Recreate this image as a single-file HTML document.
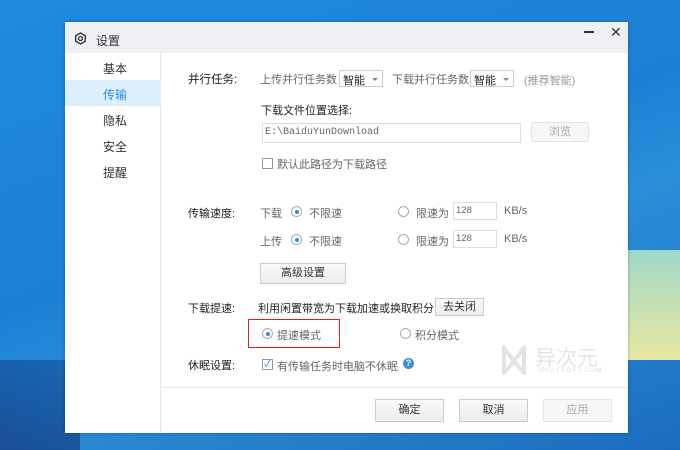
<!DOCTYPE html>
<html><head><meta charset="utf-8"><style>
*{margin:0;padding:0;box-sizing:border-box}
body{width:680px;height:450px;overflow:hidden;position:relative;font-family:"Liberation Sans","Noto Sans CJK SC",sans-serif;font-size:11px;color:#333;
background:linear-gradient(160deg,#1f8ae0 0%,#1c7fd6 45%,#2a8fd8 60%,#1b6cc0 100%)}
.a{position:absolute;white-space:nowrap}
#bg1{position:absolute;right:0;top:250px;width:60px;height:110px;background:linear-gradient(180deg,#9fd8c8,#e8e8a0);}
#bg2{position:absolute;left:0;top:360px;width:80px;height:90px;background:linear-gradient(200deg,#1866b5,#1a4f95)}
#win{position:absolute;left:65px;top:22px;width:563px;height:411px;background:#fff;box-shadow:0 0 3px rgba(0,0,0,.3)}
#tb{position:absolute;left:0;top:0;width:563px;height:31px;background:#eef0f3}
#side{position:absolute;left:0;top:31px;width:96px;height:380px;border-right:1px solid #e6e6e6}
.sel{position:absolute;left:0;top:27px;width:96px;height:26px;background:#dcefff}
.dd{position:absolute;height:17px;border:1px solid #ccc;background:#fff;font-size:11px;padding:1px 3px;color:#222}
.dd:after{content:"";position:absolute;right:4px;top:7px;border:3px solid transparent;border-top:3px solid #888}
.btn{position:absolute;border:1px solid #ccc;background:linear-gradient(#fafafa,#ececec);text-align:center;font-size:11px;color:#333}
.rad{position:absolute;width:11px;height:11px;border:1px solid #aaa;border-radius:50%;background:#fff}
.rad.on:after{content:"";position:absolute;left:2.5px;top:2.5px;width:4px;height:4px;border-radius:50%;background:#2a8ee8}
.inp{position:absolute;border:1px solid #ddd;background:#fff;font-size:10px;color:#666;padding:3px 2px}
.gray{color:#666}
</style></head><body>
<div id="bg1"></div><div id="bg2"></div>
<div id="win">
 <div id="tb">
  <svg class="a" style="left:9px;top:10px" width="13" height="13" viewBox="0 0 13 13"><path d="M6.5 1 L11.3 3.75 L11.3 9.25 L6.5 12 L1.7 9.25 L1.7 3.75Z" fill="none" stroke="#333" stroke-width="1.4"/><circle cx="6.5" cy="6.5" r="2" fill="none" stroke="#333" stroke-width="1.3"/></svg>
  <div class="a" style="left:31px;top:10px;font-size:12px;color:#333">设置</div>
  <div class="a" style="left:519px;top:9px;width:10px;height:1.5px;background:#333"></div>
  <div class="a" style="left:545px;top:2px;font-size:14px;color:#333">✕</div>
 </div>
 <div id="side">
  <div class="sel"></div>
  <div class="a" style="left:38px;top:7px;font-size:12px">基本</div>
  <div class="a" style="left:38px;top:33px;font-size:12px;color:#2a8ee8">传输</div>
  <div class="a" style="left:38px;top:59px;font-size:12px">隐私</div>
  <div class="a" style="left:38px;top:85px;font-size:12px">安全</div>
  <div class="a" style="left:38px;top:111px;font-size:12px">提醒</div>
 </div>
 <div class="a" style="left:123px;top:49px;font-size:11.5px;color:#222">并行任务:</div>
 <div class="a gray" style="left:195px;top:49px">上传并行任务数</div>
 <div class="dd" style="left:274px;top:48px;width:44px">智能</div>
 <div class="a gray" style="left:327px;top:49px">下载并行任务数</div>
 <div class="dd" style="left:405px;top:48px;width:44px">智能</div>
 <div class="a" style="left:459px;top:50px;color:#999">(推荐智能)</div>
 <div class="a" style="left:196px;top:80px;color:#222">下载文件位置选择:</div>
 <div class="inp" style="left:197px;top:101px;width:259px;height:20px;font-family:'Liberation Mono',monospace">E:\BaiduYunDownload</div>
 <div class="btn" style="left:466px;top:100px;width:58px;height:20px;line-height:18px;color:#aaa;background:#f7f7f7;border-color:#e3e3e3">浏览</div>
 <div class="a" style="left:197px;top:136px;width:11px;height:11px;border:1px solid #999;background:#fff"></div>
 <div class="a gray" style="left:212px;top:134px">默认此路径为下载路径</div>
 <div class="a" style="left:123px;top:183px;color:#222">传输速度:</div>
 <div class="a gray" style="left:195px;top:183px">下载</div>
 <div class="rad on" style="left:226px;top:184px"></div>
 <div class="a gray" style="left:244px;top:183px">不限速</div>
 <div class="rad" style="left:333px;top:184px"></div>
 <div class="a gray" style="left:351px;top:183px">限速为</div>
 <div class="inp" style="left:388px;top:180px;width:44px;height:18px;font-size:9.5px;padding:2px">128</div>
 <div class="a gray" style="left:439px;top:183px">KB/s</div>
 <div class="a gray" style="left:195px;top:211px">上传</div>
 <div class="rad on" style="left:226px;top:212px"></div>
 <div class="a gray" style="left:244px;top:211px">不限速</div>
 <div class="rad" style="left:333px;top:212px"></div>
 <div class="a gray" style="left:351px;top:211px">限速为</div>
 <div class="inp" style="left:388px;top:208px;width:44px;height:18px;font-size:9.5px;padding:2px">128</div>
 <div class="a gray" style="left:439px;top:211px">KB/s</div>
 <div class="btn" style="left:195px;top:241px;width:86px;height:21px;line-height:19px">高级设置</div>
 <div class="a" style="left:123px;top:278px;color:#222">下载提速:</div>
 <div class="a" style="left:193px;top:278px;color:#222">利用闲置带宽为下载加速或换取积分</div>
 <div class="btn" style="left:370px;top:276px;width:49px;height:18px;line-height:16px">去关闭</div>
 <div class="a" style="left:183px;top:297px;width:92px;height:29px;border:1.5px solid #e02020"></div>
 <div class="rad on" style="left:197px;top:306px"></div>
 <div class="a gray" style="left:212px;top:305px">提速模式</div>
 <div class="rad" style="left:335px;top:306px"></div>
 <div class="a gray" style="left:350px;top:305px">积分模式</div>
 <div class="a" style="left:123px;top:335px;color:#222">休眠设置:</div>
 <div class="a" style="left:197px;top:337px;width:11px;height:11px;border:1px solid #999;background:#fff;font-size:10px;line-height:9px;color:#2a8ee8;text-align:center">✓</div>
 <div class="a gray" style="left:212px;top:336px">有传输任务时电脑不休眠</div>
 <div class="a" style="left:338px;top:336px;width:11px;height:11px;border-radius:50%;background:#3b8fe0;color:#fff;font-size:9px;line-height:11px;text-align:center;font-weight:bold">?</div>
 <svg class="a" style="left:436px;top:323px" width="26" height="30" viewBox="0 0 26 30"><path d="M3 28 V3 L13 16 L23 3 V28 L13 16Z" fill="none" stroke="#e3e3e3" stroke-width="4"/></svg>
 <div class="a" style="left:470px;top:320px;font-size:21px;color:#e4e4e4">异次元</div>
 <div class="a" style="left:473px;top:345px;font-size:6.5px;color:#ddd;letter-spacing:1px">IPLAYSOFT.COM</div>
 <div class="a" style="left:97px;top:365px;width:466px;height:1px;background:#e8e8e8"></div>
 <div class="btn" style="left:310px;top:377px;width:69px;height:23px;line-height:21px">确定</div>
 <div class="btn" style="left:394px;top:377px;width:69px;height:23px;line-height:21px">取消</div>
 <div class="btn" style="left:478px;top:377px;width:69px;height:23px;line-height:21px;color:#aaa;background:#f7f7f7;border-color:#e3e3e3">应用</div>
</div>
</body></html>
